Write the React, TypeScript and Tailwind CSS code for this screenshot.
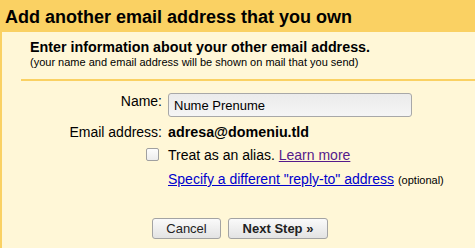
import React, { useState } from "react";

const App = () => {
  const [name, setName] = useState("Nume Prenume");
  const [alias, setAlias] = useState(false);

  return (
    <div
      className="w-[475px] h-[248px] overflow-hidden bg-[#fff7d7] text-black"
      style={{ fontFamily: '"Liberation Sans", Arial, sans-serif' }}
    >
      <div className="h-[32px] bg-[#fad163] pl-[5px] pt-[7px] text-[18px] font-bold leading-[21px]">
        Add another email address that you own
      </div>

      <div className="border-l-2 border-[#fad163] h-[216px]">
        <div className="pl-[28px] pt-[7px]">
          <div className="text-[14.3px] font-bold leading-[16px]">
            Enter information about your other email address.
          </div>
          <div className="mt-[1px] text-[11px] leading-[13px]">
            (your name and email address will be shown on mail that you send)
          </div>
        </div>

        <div className="ml-[19px] mt-[10px] h-[2px] bg-[#fad163]" />

        <div className="mt-[12px] grid grid-cols-[160px_1fr] gap-x-[6px] text-[14px] leading-[16px]">
          <div className="text-right">Name:</div>
          <div>
            <input
              value={name}
              onChange={(e) => setName(e.target.value)}
              className="w-[244px] h-[24px] rounded-[3px] border border-[#a8a8a8] bg-gradient-to-b from-[#ebebeb] to-[#f5f5f5] px-[5px] text-[13px] text-black outline-none"
            />
          </div>

          <div className="mt-[7px] text-right">Email address:</div>
          <div className="mt-[7px] text-[14.3px] font-bold">adresa@domeniu.tld</div>

          <div className="mt-[7px] flex justify-end pr-[3px] pt-[1px]">
            <button
              onClick={() => setAlias(!alias)}
              className="w-[13px] h-[13px] rounded-[2px] border border-[#a0a0a0] bg-gradient-to-b from-[#fdfdfd] to-[#ececec]"
            >
              {alias && (
                <svg viewBox="0 0 13 13" className="w-full h-full">
                  <path d="M3 6.5l2.5 2.5 4.5-5" stroke="#333" strokeWidth="1.6" fill="none" />
                </svg>
              )}
            </button>
          </div>
          <div className="mt-[7px]">
            Treat as an alias.{" "}
            <a href="#" className="text-[#551a8b] underline">
              Learn more
            </a>
          </div>

          <div />
          <div className="mt-[8px]">
            <a href="#" className="text-[#0000cc] underline">
              Specify a different "reply-to" address
            </a>{" "}
            <span className="text-[11px]">(optional)</span>
          </div>
        </div>

        <div className="mt-[30px] flex gap-[7px] pl-[150px]">
          <button className="w-[69px] h-[21px] rounded-[3px] border border-[#a3a3a3] bg-gradient-to-b from-[#fafafa] to-[#e3e3e3] text-[13px] text-[#222]">
            Cancel
          </button>
          <button className="w-[100px] h-[21px] rounded-[3px] border border-[#a3a3a3] bg-gradient-to-b from-[#fafafa] to-[#e3e3e3] text-[13px] font-bold text-[#222]">
            Next Step »
          </button>
        </div>
      </div>
    </div>
  );
};

export default App;
